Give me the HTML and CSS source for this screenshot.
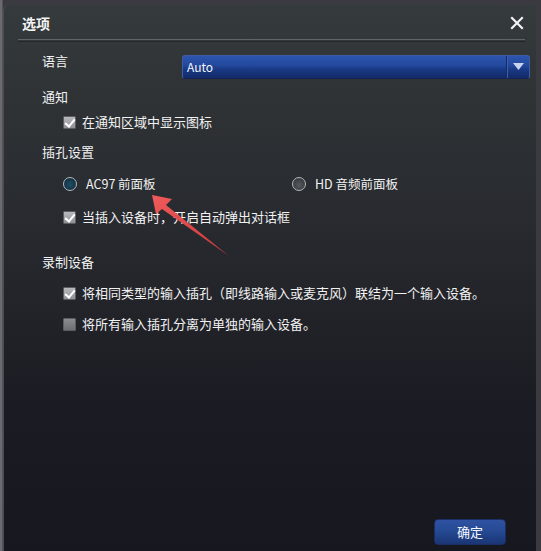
FILE: index.html
```html
<!DOCTYPE html>
<html lang="zh-CN">
<head>
<meta charset="utf-8">
<title>选项</title>
<link rel="stylesheet" href="styles.css">
</head>
<body>
<div class="frame">
  <div class="dialog">
    <div class="header">
      <span class="title">选项</span>
      <svg class="close" width="14" height="14" viewBox="0 0 14 14"><path d="M2 2 L12 12 M12 2 L2 12" stroke="#f2f2f2" stroke-width="2.2" stroke-linecap="square"/></svg>
    </div>
    <div class="sep"></div>
    <div class="body">
      <div class="lang-row">
        <span class="label lang-label">语言</span>
        <div class="select">
          <span class="select-text">Auto</span>
          <span class="select-btn"><svg width="11" height="8" viewBox="0 0 11 8"><path d="M0 0 H11 L5.5 7 Z" fill="#c9d3ee"/></svg></span>
        </div>
      </div>
      <div class="label sec sec-notify">通知</div>
      <div class="check-row cr1"><span class="cb on"></span><span class="txt">在通知区域中显示图标</span></div>
      <div class="label sec sec-jack">插孔设置</div>
      <div class="radio-row">
        <div class="radio-item first"><span class="radio sel"></span><span class="txt">AC97 前面板</span></div>
        <div class="radio-item"><span class="radio"></span><span class="txt">HD 音频前面板</span></div>
      </div>
      <div class="check-row cr2"><span class="cb on"></span><span class="txt">当插入设备时，开启自动弹出对话框</span></div>
      <div class="label sec sec-rec">录制设备</div>
      <div class="check-row cr3"><span class="cb on"></span><span class="txt">将相同类型的输入插孔（即线路输入或麦克风）联结为一个输入设备。</span></div>
      <div class="check-row cr4"><span class="cb"></span><span class="txt">将所有输入插孔分离为单独的输入设备。</span></div>
      <div class="footer"><button class="ok">确定</button></div>
    </div>
  </div>
  <svg class="arrow" width="541" height="551" viewBox="0 0 541 551">
    <defs>
      <linearGradient id="ag" x1="0" y1="0" x2="1" y2="1">
        <stop offset="0" stop-color="#f05a5a"/>
        <stop offset="1" stop-color="#c83838"/>
      </linearGradient>
    </defs>
    <polygon points="152,195 172,199 166,205 229,256 162,209 156,214" fill="url(#ag)"/>
  </svg>
</div>
</body>
</html>
```
FILE: styles.css
```css
html, body {
  margin: 0;
  padding: 0;
  background: #3d3c42;
}
body {
  width: 541px;
  height: 551px;
  overflow: hidden;
  font-family: "Noto Sans CJK SC", "Noto Sans", "Liberation Sans", sans-serif;
  color: #f2f2f2;
}
.frame {
  position: relative;
  width: 541px;
  height: 551px;
  padding: 5px 4px 0 3px;
  box-sizing: border-box;
  background: linear-gradient(to right, #6a6a70 0, #6a6a70 2px, #3b3a40 3px);
}
.dialog {
  height: 546px;
  display: flex;
  flex-direction: column;
  border-radius: 6px 6px 0 0;
  border-left: 1px solid #4a4e52;
  border-right: 1px solid #3a3d40;
  background: linear-gradient(to bottom, #353a3c 0, #2f3336 90px, #25272c 260px, #1b1c23 400px, #17181f 546px);
  box-sizing: border-box;
}
.header {
  height: 34px;
  display: flex;
  align-items: center;
  justify-content: space-between;
  padding: 0 12px 0 18px;
}
.title {
  font-size: 14px;
  font-weight: bold;
  line-height: 18px;
  margin-top: 1px;
}
.close {
  display: block;
  margin-top: 2px;
}
.sep {
  height: 1px;
  margin: 0 11px 0 14px;
  border-top: 1px solid #5f6466;
  border-bottom: 1px solid #24272a;
}
.body {
  flex: 1;
  display: flex;
  flex-direction: column;
  padding-left: 38px;
}
.label {
  font-size: 13px;
  line-height: 18px;
  height: 18px;
}
.lang-row {
  display: flex;
  align-items: flex-start;
  margin-top: 13px;
  height: 24px;
}
.lang-label {
  width: 140px;
  margin-top: -3px;
}
.select {
  flex: 1;
  margin-right: 6px;
  height: 24px;
  box-sizing: border-box;
  display: flex;
  align-items: center;
  border-radius: 3px;
  border: 1px solid #3f5da6;
  border-bottom-color: #14245a;
  background: linear-gradient(to bottom, #2d55ad 0, #234a9f 40%, #1a3a86 60%, #122a68 100%);
}
.select-text {
  flex: 1;
  padding-left: 4px;
  font-size: 12px;
  line-height: 18px;
  color: #f4f6fb;
}
.select-btn {
  width: 22px;
  height: 100%;
  display: flex;
  align-items: center;
  justify-content: center;
  border-left: 1px solid #132a62;
  box-shadow: inset 1px 0 0 #3d5fae;
}
.sec-notify { margin-top: 9px; }
.sec-jack { margin-top: 12px; }
.sec-rec { margin-top: 27px; }
.check-row {
  display: flex;
  align-items: center;
  height: 18px;
  padding-left: 21px;
  font-size: 13px;
  line-height: 18px;
}
.cr1 { margin-top: 7px; }
.cr2 { margin-top: 15px; }
.cr3 { margin-top: 13px; }
.cr4 { margin-top: 13px; }
.txt {
  white-space: nowrap;
}
.check-row .txt { margin-left: 6px; }
.cb {
  width: 13px;
  height: 13px;
  box-sizing: border-box;
  border: 1px solid #5a5d62;
  border-radius: 1px;
  background: linear-gradient(to bottom, #8a8c90, #6c6e73);
  position: relative;
  flex: none;
}
.cb.on {
  background: linear-gradient(to bottom, #b7b9bd, #8f9196);
}
.cb.on::after {
  content: "";
  position: absolute;
  left: 3px;
  top: 0px;
  width: 4px;
  height: 8px;
  border-right: 2.5px solid #ffffff;
  border-bottom: 2.5px solid #ffffff;
  transform: rotate(40deg);
}
.radio-row {
  display: flex;
  align-items: center;
  height: 18px;
  margin-top: 14px;
  padding-left: 21px;
  font-size: 13px;
  line-height: 18px;
}
.radio-item {
  display: flex;
  align-items: center;
}
.radio-item.first { width: 229px; }
.radio-item .txt { margin-left: 9px; font-size: 12.5px; }
.radio {
  width: 14px;
  height: 14px;
  box-sizing: border-box;
  border-radius: 50%;
  border: 1.5px solid #b4b8bc;
  background: radial-gradient(circle at 50% 60%, #55595e, #2e3134);
  flex: none;
}
.radio.sel {
  background: radial-gradient(circle at 50% 55%, #1f4f66, #0f2634);
}
.footer {
  margin-top: auto;
  display: flex;
  justify-content: flex-end;
  padding: 0 30px 6px 0;
}
.ok {
  width: 72px;
  height: 26px;
  border-radius: 4px;
  border: 1px solid #1a2f66;
  background: linear-gradient(to bottom, #2f53a2 0, #244891 50%, #1a3574 100%);
  color: #f6f8fc;
  font-family: "Noto Sans CJK SC", sans-serif;
  font-size: 13px;
  line-height: 18px;
  padding: 0;
}
.arrow {
  position: absolute;
  left: 0;
  top: 0;
  pointer-events: none;
}
```
